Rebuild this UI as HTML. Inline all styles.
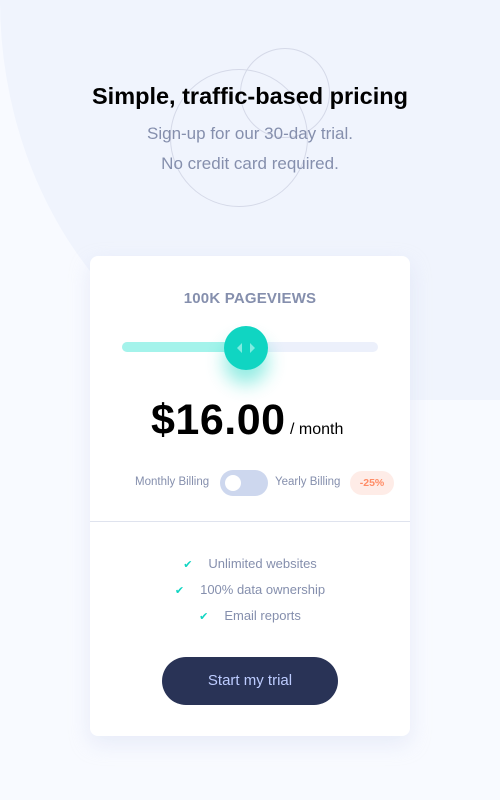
<!DOCTYPE html>
<html><head><meta charset="utf-8"><style>
*{margin:0;padding:0;box-sizing:border-box}
body{width:500px;height:800px;background:#f8faff;font-family:"Liberation Sans",sans-serif;position:relative;overflow:hidden}
.bg{position:absolute;left:0;top:0;width:500px;height:400px;background:#f0f4fd;border-bottom-left-radius:340px 400px}
.c{position:absolute;border:1px solid #d5d9e8;border-radius:50%}
.abs{position:absolute;left:0;width:500px;text-align:center}
.sub{color:#858fad;font-size:17px}
.card{position:absolute;left:90px;top:256px;width:320px;height:480px;background:#fff;border-radius:8px;box-shadow:0 8px 20px rgba(200,210,235,.35)}
.t{position:absolute;left:0;width:320px;text-align:center}
</style></head><body>
<div class="bg"></div>
<div class="c" style="left:170px;top:69px;width:138px;height:138px"></div>
<div class="c" style="left:240px;top:48px;width:90px;height:90px"></div>
<div class="abs" style="top:83px;font-size:23.5px;font-weight:bold;color:#000">Simple, traffic-based pricing</div>
<div class="abs sub" style="top:124px">Sign-up for our 30-day trial.</div>
<div class="abs sub" style="top:154px">No credit card required.</div>
<div class="card">
 <div class="t" style="top:34px;font-size:15px;font-weight:bold;color:#858fad;letter-spacing:0.2px">100K PAGEVIEWS</div>
 <div style="position:absolute;left:32px;top:86px;width:256px;height:10px;border-radius:5px;background:#ecf0fb"></div>
 <div style="position:absolute;left:32px;top:86px;width:120px;height:10px;border-radius:5px;background:#a4f3eb"></div>
 <div style="position:absolute;left:134px;top:70px;width:44px;height:44px;border-radius:50%;background:#10d5c2;box-shadow:0 14px 18px rgba(16,213,194,.45)">
  <svg width="44" height="44" viewBox="0 0 44 44"><path d="M18 17v10l-5-5z M26 17v10l5-5z" fill="#80ece1"/></svg>
 </div>
 <div style="position:absolute;left:61px;top:140px;font-size:43px;font-weight:bold;color:#000;letter-spacing:0.5px">$16.00</div>
 <div style="position:absolute;left:200px;top:165px;font-size:16px;color:#000">/ month</div>
 <div style="position:absolute;left:45px;top:220px;font-size:11.5px;color:#858fad">Monthly Billing</div>
 <div style="position:absolute;left:130px;top:214px;width:48px;height:26px;border-radius:13px;background:#cdd7ee"><div style="position:absolute;left:5px;top:5px;width:16px;height:16px;border-radius:50%;background:#fff"></div></div>
 <div style="position:absolute;left:185px;top:220px;font-size:11.5px;color:#858fad">Yearly Billing</div>
 <div style="position:absolute;left:260px;top:215px;width:44px;height:24px;border-radius:12px;background:#feece7;color:#ff8c66;font-size:10.5px;font-weight:bold;text-align:center;line-height:24px">-25%</div>
 <div style="position:absolute;left:0;top:265px;width:320px;height:1px;background:#dfe3ee"></div>
 <div class="t" style="top:300px;font-size:13px;color:#858fad"><span style="color:#10d5c2;font-size:11px;margin-right:16px">✔</span>Unlimited websites</div>
 <div class="t" style="top:326px;font-size:13px;color:#858fad"><span style="color:#10d5c2;font-size:11px;margin-right:16px">✔</span>100% data ownership</div>
 <div class="t" style="top:352px;font-size:13px;color:#858fad"><span style="color:#10d5c2;font-size:11px;margin-right:16px">✔</span>Email reports</div>
 <div style="position:absolute;left:72px;top:401px;width:176px;height:48px;border-radius:24px;background:#293356;color:#bdccff;font-size:15px;text-align:center;line-height:48px">Start my trial</div>
</div>
</body></html>
